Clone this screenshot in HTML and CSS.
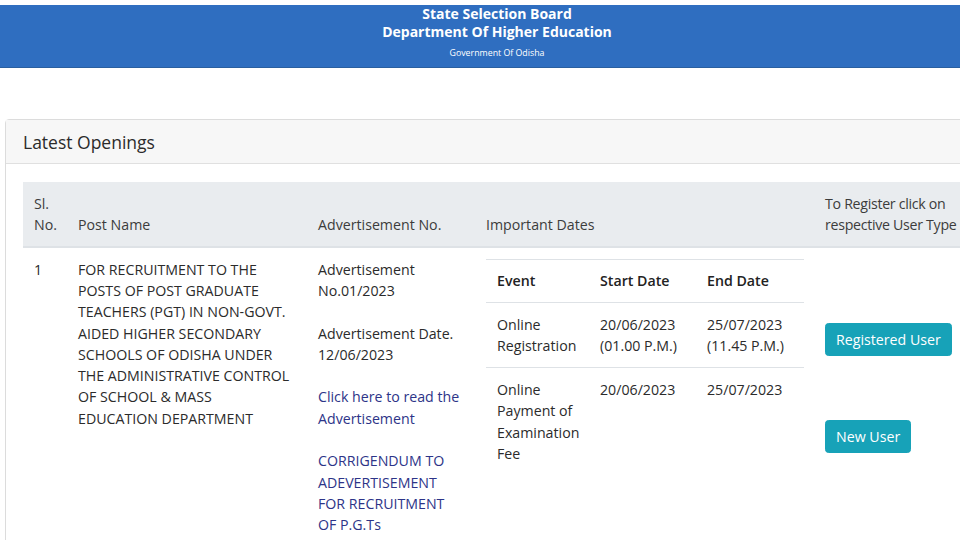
FILE: index.html
```html
<!DOCTYPE html>
<html lang="en">
<head>
    <meta charset="UTF-8">
    <meta name="viewport" content="width=device-width, initial-scale=1.0">
    <title>State Selection Board</title>
    <link rel="stylesheet" href="styles.css">
</head>
<body>
    <div class="topbar">
        <h1>State Selection Board</h1>
        <h2>Department Of Higher Education</h2>
        <p>Government Of Odisha</p>
    </div>

    <div class="card">
        <div class="card-header">Latest Openings</div>
        <div class="card-body">
            <table class="openings">
                <colgroup>
                    <col class="c-sl">
                    <col class="c-post">
                    <col class="c-adv">
                    <col class="c-dates">
                    <col class="c-reg">
                </colgroup>
                <thead>
                    <tr>
                        <th>Sl.<br>No.</th>
                        <th>Post Name</th>
                        <th>Advertisement No.</th>
                        <th>Important Dates</th>
                        <th class="reg-head">To Register click on respective User Type</th>
                    </tr>
                </thead>
                <tbody>
                    <tr>
                        <td>1</td>
                        <td class="post">FOR RECRUITMENT TO THE POSTS OF POST GRADUATE TEACHERS (PGT) IN NON-GOVT. AIDED HIGHER SECONDARY SCHOOLS OF ODISHA UNDER THE ADMINISTRATIVE CONTROL OF SCHOOL &amp; MASS EDUCATION DEPARTMENT</td>
                        <td>
                            <p>Advertisement No.01/2023</p>
                            <p>Advertisement Date. 12/06/2023</p>
                            <p><a href="#">Click here to read the Advertisement</a></p>
                            <p><a href="#">CORRIGENDUM TO ADEVERTISEMENT FOR RECRUITMENT OF P.G.Ts</a></p>
                        </td>
                        <td>
                            <table class="dates">
                                <colgroup>
                                    <col class="d-event">
                                    <col class="d-start">
                                    <col class="d-end">
                                </colgroup>
                                <thead>
                                    <tr>
                                        <th>Event</th>
                                        <th>Start Date</th>
                                        <th>End Date</th>
                                    </tr>
                                </thead>
                                <tbody>
                                    <tr>
                                        <td>Online Registration</td>
                                        <td>20/06/2023 (01.00 P.M.)</td>
                                        <td>25/07/2023 (11.45 P.M.)</td>
                                    </tr>
                                    <tr>
                                        <td>Online Payment of Examination Fee</td>
                                        <td>20/06/2023</td>
                                        <td>25/07/2023</td>
                                    </tr>
                                </tbody>
                            </table>
                        </td>
                        <td>
                            <div class="actions">
                                <a class="btn" href="#">Registered User</a>
                                <a class="btn" href="#">New User</a>
                            </div>
                        </td>
                    </tr>
                </tbody>
            </table>
        </div>
    </div>
</body>
</html>
```

FILE: styles.css
```css
* {
	margin: 0px;
	padding: 0px;
	box-sizing: border-box;
}
body {
	font-family: "Open Sans", "Noto Sans", sans-serif;
	font-size: 14.2px;
	line-height: 21.3px;
	color: #2b2b2b;
	background-color: #fff;
	overflow: hidden;
	padding-top: 5px;
	width: 960px;
}
.topbar {
	background-color: #2f6ec0;
	border-bottom: 1px solid #2a5f9f;
	color: #fff;
	text-align: center;
	height: 63px;
	padding: 0 0 0 34px;
}
.topbar h1,
.topbar h2 {
	font-size: 14px;
	line-height: 18px;
	font-weight: 700;
}
.topbar p {
	font-size: 8.8px;
	line-height: 12px;
	margin-top: 6px;
}
.card {
	margin: 51px 0 0 5px;
	width: 990px;
	border: 1px solid #dcdcdc;
	border-radius: 4px;
}
.card-header {
	background-color: #f7f7f7;
	border-bottom: 1px solid #e0e0e0;
	font-size: 17.5px;
	line-height: 24px;
	padding: 10px 17px;
	height: 44px;
}
.card-body {
	padding: 18px 17px;
}
table {
	border-collapse: collapse;
	table-layout: fixed;
}
.openings {
	width: 952px;
}
.c-sl { width: 44px; }
.c-post { width: 240px; }
.c-adv { width: 168px; }
.c-dates { width: 339px; }
.c-reg { width: 161px; }
.openings > thead > tr > th {
	background-color: #e9ecef;
	border-bottom: 2px solid #dee2e6;
	color: #3c3c3c;
	font-weight: 400;
	text-align: left;
	vertical-align: bottom;
	padding: 10.7px 11px 10.7px 11px;
}
.openings > thead > tr > th.reg-head {
	letter-spacing: -0.3px;
	padding-right: 0;
}
.openings > tbody > tr > td {
	vertical-align: top;
	padding: 10.7px 11px;
}
.openings > tbody > tr > td.post {
	padding-right: 15px;
}
.openings td p + p {
	margin-top: 21.3px;
}
a {
	color: #2d3488;
	text-decoration: none;
}
.dates {
	width: 318px;
}
.d-event { width: 103px; }
.d-start { width: 107px; }
.d-end { width: 108px; }
.dates th,
.dates td {
	border-top: 1px solid #dee2e6;
	text-align: left;
	vertical-align: top;
	padding: 10.7px 11px;
}
.dates th {
	font-weight: 600;
	color: #222;
}
.actions {
	display: flex;
	flex-direction: column;
	align-items: flex-start;
	gap: 64px;
	padding-top: 64px;
}
.btn {
	display: inline-block;
	background-color: #17a2b8;
	border: 1px solid #17a2b8;
	border-radius: 3.5px;
	color: #fff;
	padding: 5px 10px;
	white-space: nowrap;
}
```
